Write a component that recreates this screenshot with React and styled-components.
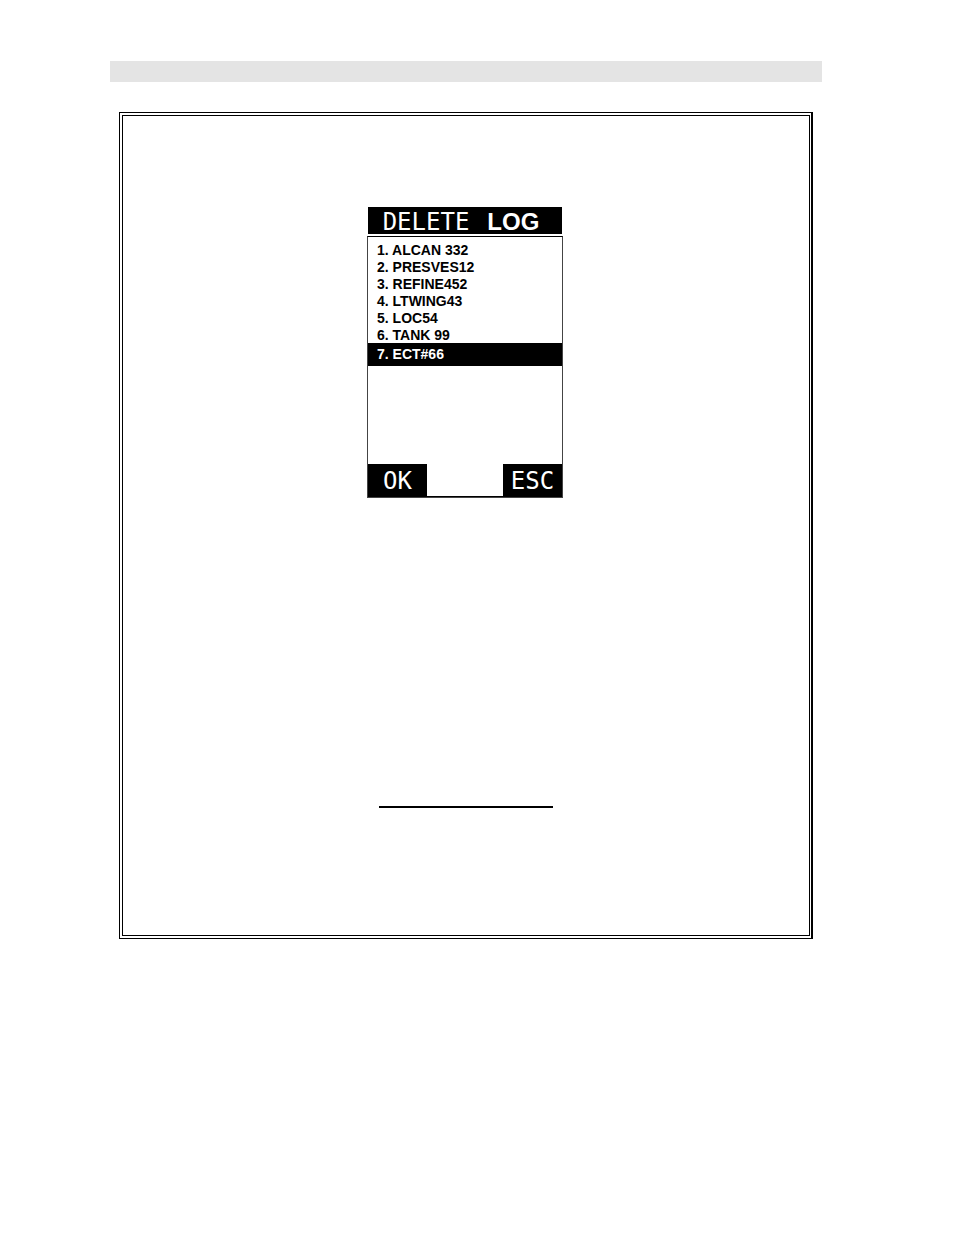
import React, { useState } from 'react';
import styled, { createGlobalStyle } from 'styled-components';

const GlobalStyle = createGlobalStyle`
  * {
    box-sizing: border-box;
  }
  body {
    margin: 0;
    background: #ffffff;
    color: #000000;
    font-family: 'Liberation Sans', Arial, sans-serif;
  }
`;

const Page = styled.div`
  padding: 61px 132px 64px 110px;
`;

const HeaderBar = styled.header`
  height: 21px;
  background: #e4e4e4;
`;

const Frame = styled.main`
  margin: 30px 9px 0;
  border: 1px solid #000000;
  border-right-width: 2px;
  padding: 2px 1px 2px 2px;
`;

const FrameInner = styled.div`
  display: flex;
  flex-direction: column;
  align-items: center;
  border: 1px solid #000000;
  padding: 91px 0 127px;
`;

const Device = styled.section`
  display: flex;
  flex-direction: column;
  gap: 2px;
  width: 196px;
  margin-right: 2px;
`;

const Title = styled.h1`
  display: flex;
  justify-content: center;
  gap: 18px;
  height: 27px;
  margin: 0 1px;
  padding-right: 8px;
  background: #000000;
  color: #ffffff;
  font-family: 'DejaVu Sans Mono', monospace;
  font-size: 24px;
  font-weight: 400;
  line-height: 30px;

  strong {
    font-family: 'Liberation Sans', Arial, sans-serif;
  }
`;

const Screen = styled.div`
  border: 1px solid #444444;
  border-top-color: #000000;
`;

const LogList = styled.ol`
  list-style: none;
  margin: 0;
  padding: 4px 0 0;
`;

const LogButton = styled.button`
  display: block;
  width: 100%;
  margin: 0;
  border: 0;
  padding: ${({ $selected }) => ($selected ? '3px 9px 4px' : '1px 9px 0')};
  background: ${({ $selected }) => ($selected ? '#000000' : 'transparent')};
  color: ${({ $selected }) => ($selected ? '#ffffff' : '#000000')};
  font: bold 14px/16px 'Liberation Sans', Arial, sans-serif;
  text-align: left;
`;

const SoftKeys = styled.div`
  display: flex;
  justify-content: space-between;
  margin-top: 98px;
  border-bottom: 1px solid #000000;
`;

const SoftKey = styled.button`
  width: 59px;
  height: 32px;
  border: 0;
  padding: 2px 0 0;
  background: #000000;
  color: #ffffff;
  font: 24px/30px 'DejaVu Sans Mono', monospace;
`;

const Rule = styled.hr`
  width: 174px;
  margin: 308px 0 0;
  border: 0;
  border-top: 2px solid #000000;
`;

const logs = ['ALCAN 332', 'PRESVES12', 'REFINE452', 'LTWING43', 'LOC54', 'TANK 99', 'ECT#66'];

function App() {
  const [selected, setSelected] = useState(6);

  return (
    <>
      <GlobalStyle />
      <Page>
        <HeaderBar />
        <Frame>
          <FrameInner>
            <Device>
              <Title>
                <span>DELETE</span>
                <strong>LOG</strong>
              </Title>
              <Screen>
                <LogList>
                  {logs.map((name, index) => (
                    <li key={name}>
                      <LogButton
                        type="button"
                        $selected={index === selected}
                        onClick={() => setSelected(index)}
                      >
                        {index + 1}. {name}
                      </LogButton>
                    </li>
                  ))}
                </LogList>
                <SoftKeys>
                  <SoftKey type="button">OK</SoftKey>
                  <SoftKey type="button">ESC</SoftKey>
                </SoftKeys>
              </Screen>
            </Device>
            <Rule />
          </FrameInner>
        </Frame>
      </Page>
    </>
  );
}

export default App;
